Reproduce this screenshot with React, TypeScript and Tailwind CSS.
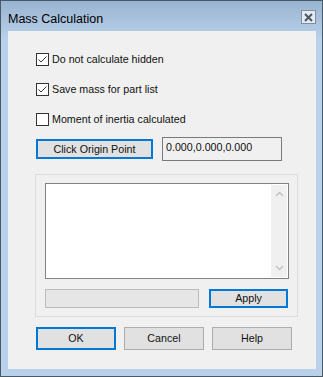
import React from 'react';

const Check = ({ checked, label }: { checked: boolean; label: string }) => (
  <div className="flex items-center h-[13px] gap-[3px]">
    <div className="w-[13px] h-[13px] border border-[#333333] bg-white flex items-center justify-center shrink-0">
      {checked && (
        <svg width="11" height="11" viewBox="0 0 11 11">
          <path d="M1.5 5.5 L4 8 L9.5 2.5" fill="none" stroke="#3c3c3c" strokeWidth="1" />
        </svg>
      )}
    </div>
    <span className="text-[10.7px] leading-[13px] text-[#111111]">{label}</span>
  </div>
);

const Button = ({ label, width, height, focused }: { label: string; width: string; height: string; focused?: boolean }) => (
  <div
    className={`${width} ${height} bg-[#e1e1e1] flex items-center justify-center text-[10.7px] text-[#111111] ${
      focused ? 'border-2 border-[#0078d7]' : 'border border-[#adadad]'
    }`}
  >
    {label}
  </div>
);

export default function App() {
  return (
    <div
      className="w-[323px] h-[377px] border border-[#4b5967] bg-gradient-to-b from-[#99b4d1] via-[#b9d1ea] via-[10%] to-[#b9d1ea] flex flex-col"
      style={{ fontFamily: '"Liberation Sans", Arial, sans-serif' }}
    >
      {/* Title bar */}
      <div className="h-[30px] flex items-start justify-between pl-[7px] pr-[6px]">
        <span className="text-[12.5px] text-black mt-[11px] leading-[15px]">Mass Calculation</span>
        <div className="mt-[9px] w-[15px] h-[14px] border border-[#7f8fa0] bg-[#e3eaf2] flex items-center justify-center">
          <svg width="9" height="9" viewBox="0 0 9 9">
            <path d="M1 1 L8 8 M8 1 L1 8" stroke="#4a5866" strokeWidth="2" />
          </svg>
        </div>
      </div>

      {/* Client area */}
      <div className="ml-[7px] w-[308px] h-[338px] bg-[#f0f0f0] flex flex-col pl-[28px]">
        <div className="mt-[22px] flex flex-col gap-[17px]">
          <Check checked label="Do not calculate hidden" />
          <Check checked label="Save mass for part list" />
          <Check checked={false} label="Moment of inertia calculated" />
        </div>

        <div className="mt-[11px] flex items-center gap-[9px]">
          <Button label="Click Origin Point" width="w-[117px]" height="h-[20px]" focused />
          <div className="w-[120px] h-[24px] border border-[#7a7a7a] bg-[#f0f0f0] pl-[3px] pt-[3px] text-[10.7px] leading-[13px] text-[#111111]">
            0.000,0.000,0.000
          </div>
        </div>

        {/* Group box */}
        <div className="mt-[13px] -ml-px w-[263px] h-[143px] border border-[#dcdcdc] flex flex-col pl-[9px] pt-[8px]">
          <div className="w-[244px] h-[96px] border border-[#828282] bg-white p-px flex justify-end">
            <div className="w-[16px] h-full bg-[#f0f0f0] flex flex-col items-center justify-between py-[6px]">
              <svg width="9" height="6" viewBox="0 0 9 6">
                <path d="M1 5 L4.5 1.5 L8 5" fill="none" stroke="#c2c2c2" strokeWidth="1.5" />
              </svg>
              <svg width="9" height="6" viewBox="0 0 9 6">
                <path d="M1 1 L4.5 4.5 L8 1" fill="none" stroke="#c2c2c2" strokeWidth="1.5" />
              </svg>
            </div>
          </div>
          <div className="mt-[10px] flex items-center gap-[10px]">
            <div className="w-[154px] h-[19px] border border-[#bcbcbc] bg-[#e6e6e6]" />
            <Button label="Apply" width="w-[79px]" height="h-[19px]" focused />
          </div>
        </div>

        <div className="mt-[10px] flex gap-[8px]">
          <Button label="OK" width="w-[80px]" height="h-[23px]" focused />
          <Button label="Cancel" width="w-[80px]" height="h-[23px]" />
          <Button label="Help" width="w-[80px]" height="h-[23px]" />
        </div>
      </div>
    </div>
  );
}
